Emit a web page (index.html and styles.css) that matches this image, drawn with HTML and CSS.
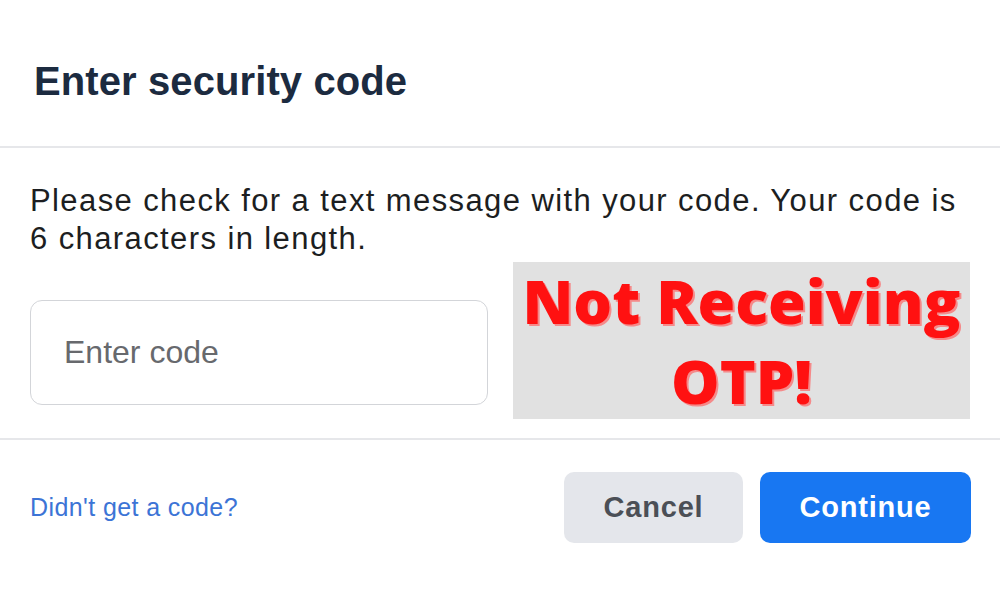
FILE: index.html
```html
<!DOCTYPE html>
<html>
<head>
	<title>Enter security code</title>
	<meta charset=utf-8>
	<meta name=viewport content="width=device-width, initial-scale=1">
	<link rel="stylesheet" href="styles.css">
</head>
<body>
	<div class="dialog">
		<div class="dlg-head">
			<h2 class="dlg-title">Enter security code</h2>
		</div>
		<div class="dlg-body">
			<p class="dlg-text">Please check for a text message with your code. Your code is 6 characters in length.</p>
			<div class="code-row">
				<div class="code-input">Enter code</div>
				<div class="otp-banner">
					<span>Not Receiving</span>
					<span>OTP!</span>
				</div>
			</div>
		</div>
		<div class="dlg-foot">
			<a class="resend" href="#">Didn't get a code?</a>
			<div class="btns">
				<button class="btn btn-cancel">Cancel</button>
				<button class="btn btn-continue">Continue</button>
			</div>
		</div>
	</div>
</body>
</html>
```

FILE: styles.css
```css
	body{
		margin:0;
		background: #fff;
		font-family: "Liberation Sans", Arial, sans-serif;
	}
	.dialog{
		width: 1000px;
		height: 600px;
	}
	.dlg-head{
		padding: 57px 34px 41px;
		border-bottom: 2px solid #e6e7ea;
	}
	.dlg-title{
		margin: 0;
		font-size: 40px;
		line-height: 48px;
		font-weight: bold;
		color: #1c2b40;
		letter-spacing: 0.1px;
	}
	.dlg-body{
		padding: 34px 30px 19px;
		border-bottom: 2px solid #e6e7ea;
	}
	.dlg-text{
		margin: 0;
		font-size: 31px;
		line-height: 38px;
		color: #1c1e21;
		letter-spacing: 1.4px;
	}
	.code-row{
		display: flex;
		align-items: flex-start;
		gap: 25px;
		margin-top: 4px;
	}
	.code-input{
		box-sizing: border-box;
		width: 458px;
		height: 105px;
		margin-top: 38px;
		border: 1px solid #d3d5d9;
		border-radius: 12px;
		padding-left: 33px;
		display: flex;
		align-items: center;
		font-size: 32px;
		color: #67696d;
	}
	.otp-banner{
		width: 457px;
		height: 157px;
		background: #e1e1e1;
		display: flex;
		flex-direction: column;
		align-items: center;
		justify-content: center;
		font-family: "Open Sans", sans-serif;
		font-weight: 800;
		font-size: 61px;
		line-height: 80px;
		color: #ff1111;
		text-shadow: 2px 2px 0 #f58a8a;
	}
	.dlg-foot{
		display: flex;
		align-items: center;
		justify-content: space-between;
		padding: 32px 29px 0 30px;
	}
	.resend{
		font-size: 25px;
		color: #3c74d6;
		text-decoration: none;
		letter-spacing: 0.4px;
	}
	.btns{
		display: flex;
		gap: 17px;
	}
	.btn{
		height: 71px;
		border: 0;
		border-radius: 10px;
		font-family: "Liberation Sans", Arial, sans-serif;
		font-size: 29px;
		font-weight: bold;
		letter-spacing: 0.8px;
	}
	.btn-cancel{
		width: 179px;
		background: #e4e6eb;
		color: #4b4f56;
	}
	.btn-continue{
		width: 211px;
		background: #1877f2;
		color: #fff;
	}
```
